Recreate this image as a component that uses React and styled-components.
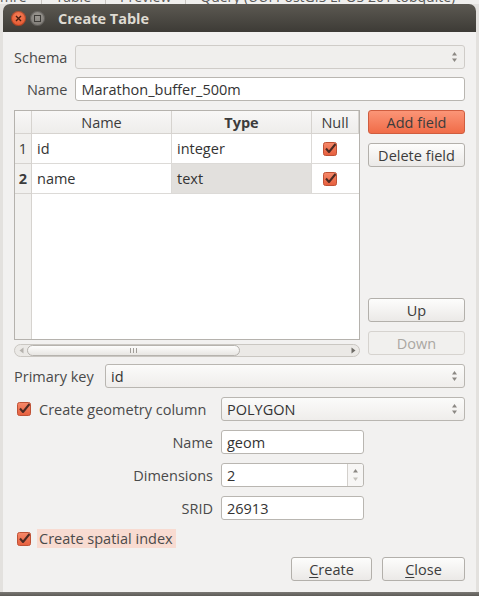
import styled, { createGlobalStyle } from "styled-components";

const GlobalStyle = createGlobalStyle`
  html, body {
    margin: 0;
    padding: 0;
  }
  body {
    width: 479px;
    height: 596px;
    overflow: hidden;
    background: #e3e1de;
    font-family: "Open Sans", "DejaVu Sans", sans-serif;
    color: #3c3c3c;
  }
`;

const Desktop = styled.div`
  display: flex;
  flex-direction: column;
  width: 479px;
  height: 596px;
`;

const TabStrip = styled.div`
  height: 4px;
  overflow: hidden;
  background: #f0efed;
  white-space: nowrap;
`;

const TabText = styled.div`
  margin-top: -11px;
  font-size: 14px;
  line-height: 16px;
  color: #5a5a5a;
  span {
    padding: 0 14px;
    border-right: 1px solid #c9c6c1;
  }
`;

const Window = styled.div`
  margin-left: 3px;
  width: 473px;
  height: 588px;
  display: flex;
  flex-direction: column;
  border-radius: 7px 7px 0 0;
  overflow: hidden;
  background: #f2f1f0;
`;

const BottomShade = styled.div`
  flex: 1;
  background: linear-gradient(#7a7874, #5d5b57);
`;

const TitleBar = styled.div`
  height: 28px;
  flex-shrink: 0;
  display: flex;
  align-items: center;
  padding-left: 8px;
  gap: 4px;
  background: linear-gradient(#5c5952, #3d3b36);
`;

const WinButton = styled.div`
  width: 15px;
  height: 15px;
  border-radius: 50%;
  display: flex;
  align-items: center;
  justify-content: center;
  background: ${(p) =>
    p.$close
      ? "radial-gradient(circle at 50% 35%, #f5805a, #df4b22)"
      : "radial-gradient(circle at 50% 35%, #9b9892, #76736e)"};
  box-shadow: inset 0 0 0 1px rgba(0, 0, 0, 0.25);
`;

const Title = styled.div`
  margin-left: 9px;
  font-size: 14.5px;
  font-weight: bold;
  color: #dfdbd2;
`;

const Body = styled.div`
  flex: 1;
  display: flex;
  flex-direction: column;
  padding: 13px 11px 11px 11px;
`;

const TopForm = styled.div`
  display: grid;
  grid-template-columns: auto 1fr;
  grid-auto-rows: 24px;
  column-gap: 8px;
  row-gap: 8px;
  align-items: center;
`;

const Label = styled.div`
  font-size: 14.5px;
  color: #4a4a4a;
  justify-self: ${(p) => (p.$left ? "start" : "end")};
  white-space: nowrap;
`;

const Field = styled.div`
  height: 24px;
  box-sizing: border-box;
  display: flex;
  align-items: center;
  padding-left: 5px;
  font-size: 14.5px;
  color: #333;
  border: 1px solid #b9b6b1;
  border-radius: 3px;
  background: #fff;
  grid-column: ${(p) => p.$span || "auto"};
`;

const Combo = styled.div`
  height: 24px;
  box-sizing: border-box;
  display: flex;
  align-items: center;
  justify-content: space-between;
  padding: 0 6px 0 5px;
  font-size: 14.5px;
  color: #333;
  border: 1px solid ${(p) => (p.$disabled ? "#cfccc8" : "#b9b6b1")};
  border-radius: 3px;
  background: ${(p) =>
    p.$disabled
      ? "#f0efed"
      : "linear-gradient(#fbfbfa, #efedeb)"};
  grid-column: ${(p) => p.$span || "auto"};
`;

const Spin = styled(Field)`
  padding: 0;
  justify-content: space-between;
  span {
    padding-left: 5px;
  }
`;

const SpinButtons = styled.div`
  width: 15px;
  height: 100%;
  border-left: 1px solid #d3d0cc;
  display: flex;
  align-items: center;
  justify-content: center;
  background: #f7f6f5;
  border-radius: 0 3px 3px 0;
`;

const TableArea = styled.div`
  margin-top: 9px;
  display: flex;
  gap: 8px;
  height: 247px;
`;

const TableBox = styled.div`
  width: 346px;
  display: flex;
  flex-direction: column;
`;

const Grid = styled.div`
  height: 231px;
  box-sizing: border-box;
  border: 1px solid #b5b2ad;
  background: #fff;
  display: grid;
  grid-template-columns: 17px 140px 140px 1fr;
  grid-template-rows: 23px 30px 30px 1fr;
`;

const HeadCell = styled.div`
  display: flex;
  align-items: center;
  justify-content: center;
  font-size: 14.5px;
  font-weight: ${(p) => (p.$bold ? "bold" : "normal")};
  color: #3c3c3c;
  background: linear-gradient(#f8f7f6, #eeedeb);
  border-right: 1px solid #d6d3cf;
  border-bottom: 1px solid #d6d3cf;
  &:last-of-type {
    border-right: none;
  }
`;

const RowHead = styled.div`
  display: flex;
  align-items: center;
  justify-content: center;
  font-size: 14.5px;
  font-weight: ${(p) => (p.$bold ? "bold" : "normal")};
  background: #f1f0ee;
  border-right: 1px solid #d6d3cf;
  border-bottom: ${(p) => (p.$filler ? "none" : "1px solid #d6d3cf")};
`;

const Cell = styled.div`
  display: flex;
  align-items: center;
  padding-left: ${(p) => (p.$check ? "11px" : "5px")};
  font-size: 14.5px;
  color: #333;
  background: ${(p) => (p.$selected ? "#e2e0dd" : "#fff")};
  border-right: ${(p) => (p.$last ? "none" : "1px solid #dcdad7")};
  border-bottom: 1px solid #dcdad7;
`;

const Filler = styled.div`
  grid-column: 2 / 5;
  background: #fff;
`;

const Scrollbar = styled.div`
  margin-top: 4px;
  height: 13px;
  box-sizing: border-box;
  display: flex;
  align-items: center;
  border: 1px solid #cac7c2;
  border-radius: 7px;
  background: #ebe9e6;
`;

const ScrollArrow = styled.div`
  width: 12px;
  display: flex;
  align-items: center;
  justify-content: center;
`;

const Thumb = styled.div`
  width: 213px;
  height: 11px;
  box-sizing: border-box;
  border: 1px solid #b6b3ae;
  border-radius: 6px;
  background: linear-gradient(#fdfdfc, #e8e6e3);
  display: flex;
  align-items: center;
  justify-content: center;
  gap: 2px;
  i {
    width: 1px;
    height: 5px;
    background: #a09d98;
  }
`;

const Track = styled.div`
  flex: 1;
`;

const SideButtons = styled.div`
  width: 97px;
  display: flex;
  flex-direction: column;
  justify-content: space-between;
  padding-bottom: 2px;
`;

const ButtonGroup = styled.div`
  display: flex;
  flex-direction: column;
  gap: 9px;
`;

const Button = styled.div`
  height: 24px;
  box-sizing: border-box;
  width: ${(p) => p.$w || "auto"};
  display: flex;
  align-items: center;
  justify-content: center;
  font-size: 14.5px;
  border-radius: 3px;
  color: ${(p) => (p.$disabled ? "#aaa7a2" : "#3c3c3c")};
  border: 1px solid
    ${(p) => (p.$primary ? "#cf5d3f" : p.$disabled ? "#d6d3cf" : "#b3b0ab")};
  background: ${(p) =>
    p.$primary
      ? "linear-gradient(#fb9577, #f06c48)"
      : p.$disabled
      ? "#f1f0ee"
      : "linear-gradient(#fdfdfc, #ebe9e7)"};
  u {
    text-decoration-thickness: 1px;
    text-underline-offset: 2px;
  }
`;

const PkRow = styled.div`
  margin-top: 7px;
  display: grid;
  grid-template-columns: 83px 1fr;
  column-gap: 8px;
  align-items: center;
`;

const GeomForm = styled.div`
  margin-top: 9px;
  display: grid;
  grid-template-columns: 199px 143px 1fr;
  grid-auto-rows: 24px;
  column-gap: 8px;
  row-gap: 9px;
  align-items: center;
`;

const CheckLabel = styled.div`
  display: flex;
  align-items: center;
  gap: 6px;
  padding-left: 3px;
  font-size: 14.5px;
  color: #4a4a4a;
  white-space: nowrap;
`;

const CheckText = styled.span`
  padding: 0 3px 0 2px;
  line-height: 19px;
  background: ${(p) => (p.$focus ? "#f8dbd1" : "transparent")};
`;

const SpatialRow = styled.div`
  margin-top: 9px;
  height: 19px;
  display: flex;
  align-items: center;
`;

const Footer = styled.div`
  margin-top: 9px;
  display: flex;
  justify-content: flex-end;
  gap: 10px;
`;

function CheckBox() {
  return (
    <svg width="14" height="14" viewBox="0 0 14 14">
      <defs>
        <linearGradient id="cbg" x1="0" y1="0" x2="0" y2="1">
          <stop offset="0" stopColor="#f6896a" />
          <stop offset="1" stopColor="#e65f3d" />
        </linearGradient>
      </defs>
      <rect x="0.5" y="0.5" width="13" height="13" rx="2" fill="url(#cbg)" stroke="#bf5236" />
      <path d="M3 6.5 L6 10 L12.5 2" fill="none" stroke="#4d2a22" strokeWidth="2" strokeLinejoin="round" />
    </svg>
  );
}

function ComboArrows() {
  return (
    <svg width="7" height="12" viewBox="0 0 7 12">
      <path d="M3.5 1 L6 4.5 H1 Z" fill="#8b8883" />
      <path d="M3.5 11 L6 7.5 H1 Z" fill="#8b8883" />
    </svg>
  );
}

function SpinArrows() {
  return (
    <svg width="7" height="16" viewBox="0 0 7 16">
      <path d="M3.5 2 L6 5.5 H1 Z" fill="#8b8883" />
      <path d="M3.5 14 L6 10.5 H1 Z" fill="#c4c1bc" />
    </svg>
  );
}

function Arrow({ dir }) {
  return (
    <svg width="5" height="7" viewBox="0 0 5 7">
      <path d={dir === "left" ? "M0.5 3.5 L4.5 0.5 V6.5 Z" : "M4.5 3.5 L0.5 0.5 V6.5 Z"} fill={dir === "left" ? "#b5b2ad" : "#6f6c67"} />
    </svg>
  );
}

export default function App() {
  return (
    <Desktop>
      <GlobalStyle />
      <TabStrip>
        <TabText>
          <span style={{ paddingLeft: 0 }}>mre</span>
          <span>Table</span>
          <span>Preview</span>
          <span style={{ border: "none" }}>Query (UUI PostGIS LPOS 201 tobquite)</span>
        </TabText>
      </TabStrip>
      <Window>
        <TitleBar>
          <WinButton $close>
            <svg width="7" height="7" viewBox="0 0 7 7">
              <path d="M1 1 L6 6 M6 1 L1 6" stroke="#4a1e10" strokeWidth="1.4" />
            </svg>
          </WinButton>
          <WinButton>
            <svg width="7" height="7" viewBox="0 0 7 7">
              <rect x="0.5" y="0.5" width="6" height="6" fill="none" stroke="#3e3c38" strokeWidth="1" />
            </svg>
          </WinButton>
          <Title>Create Table</Title>
        </TitleBar>
        <Body>
          <TopForm>
            <Label>Schema</Label>
            <Combo $disabled>
              <span />
              <ComboArrows />
            </Combo>
            <Label>Name</Label>
            <Field>Marathon_buffer_500m</Field>
          </TopForm>

          <TableArea>
            <TableBox>
              <Grid>
                <HeadCell />
                <HeadCell>Name</HeadCell>
                <HeadCell $bold>Type</HeadCell>
                <HeadCell>Null</HeadCell>

                <RowHead>1</RowHead>
                <Cell>id</Cell>
                <Cell>integer</Cell>
                <Cell $check $last>
                  <CheckBox />
                </Cell>

                <RowHead $bold>2</RowHead>
                <Cell>name</Cell>
                <Cell $selected>text</Cell>
                <Cell $check $last>
                  <CheckBox />
                </Cell>

                <RowHead $filler />
                <Filler />
              </Grid>
              <Scrollbar>
                <ScrollArrow>
                  <Arrow dir="left" />
                </ScrollArrow>
                <Thumb>
                  <i />
                  <i />
                  <i />
                </Thumb>
                <Track />
                <ScrollArrow>
                  <Arrow dir="right" />
                </ScrollArrow>
              </Scrollbar>
            </TableBox>
            <SideButtons>
              <ButtonGroup>
                <Button $primary>Add field</Button>
                <Button>Delete field</Button>
              </ButtonGroup>
              <ButtonGroup>
                <Button>Up</Button>
                <Button $disabled>Down</Button>
              </ButtonGroup>
            </SideButtons>
          </TableArea>

          <PkRow>
            <Label $left>Primary key</Label>
            <Combo>
              <span>id</span>
              <ComboArrows />
            </Combo>
          </PkRow>

          <GeomForm>
            <CheckLabel>
              <CheckBox />
              <CheckText>Create geometry column</CheckText>
            </CheckLabel>
            <Combo $span="2 / 4">
              <span>POLYGON</span>
              <ComboArrows />
            </Combo>

            <Label>Name</Label>
            <Field>geom</Field>
            <span />

            <Label>Dimensions</Label>
            <Spin>
              <span>2</span>
              <SpinButtons>
                <SpinArrows />
              </SpinButtons>
            </Spin>
            <span />

            <Label>SRID</Label>
            <Field>26913</Field>
            <span />
          </GeomForm>

          <SpatialRow>
            <CheckLabel>
              <CheckBox />
              <CheckText $focus>Create spatial index</CheckText>
            </CheckLabel>
          </SpatialRow>

          <Footer>
            <Button $w="81px">
              <span>
                <u>C</u>reate
              </span>
            </Button>
            <Button $w="83px">
              <span>
                <u>C</u>lose
              </span>
            </Button>
          </Footer>
        </Body>
      </Window>
      <BottomShade />
    </Desktop>
  );
}
